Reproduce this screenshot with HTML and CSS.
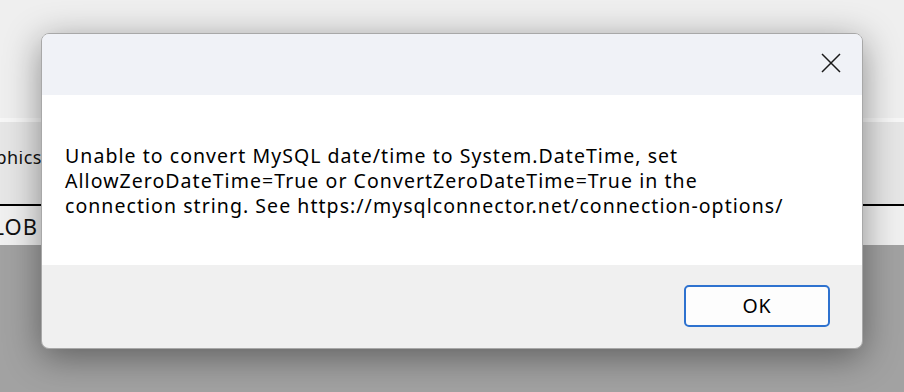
FILE: index.html
```html
<!DOCTYPE html>
<html>
<head>
<meta charset="utf-8">
<link rel="stylesheet" href="styles.css">
</head>
<body>
<div class="app">
  <div class="toolbar"></div>
  <div class="sep"></div>
  <div class="panel">
    <div class="cell"><span class="lbl">Graphics</span></div>
  </div>
  <div class="rule"></div>
  <div class="row">
    <div class="cell"><span class="lbl big">BLOB</span></div>
  </div>
  <div class="dark"></div>
</div>
<div class="dialog">
  <div class="titlebar">
    <button class="close" aria-label="Close">
      <svg width="20" height="20" viewBox="0 0 20 20"><path d="M1 1 L19 19 M19 1 L1 19" stroke="#1a1a1a" stroke-width="1.5" fill="none"/></svg>
    </button>
  </div>
  <div class="content">
    <p class="msg">Unable to convert MySQL date/time to System.DateTime, set<br>AllowZeroDateTime=True or ConvertZeroDateTime=True in the<br>connection string. See https://mysqlconnector.net/connection-options/</p>
  </div>
  <div class="footer">
    <button class="ok">OK</button>
  </div>
</div>
</body>
</html>
```
FILE: styles.css
```css
html, body {
  margin: 0;
  padding: 0;
  width: 904px;
  height: 392px;
  overflow: hidden;
  font-family: "Noto Sans", "Open Sans", sans-serif;
}
.app {
  display: flex;
  flex-direction: column;
  height: 392px;
}
.toolbar {
  height: 118px;
  background: #efefef;
}
.sep {
  height: 4px;
  background: #f7f7f7;
}
.panel {
  height: 82px;
  background: #e6e6e6;
  display: flex;
  align-items: center;
}
.cell {
  width: 42px;
  overflow: hidden;
  display: flex;
  justify-content: flex-end;
  white-space: nowrap;
}
.lbl {
  font-size: 18px;
  letter-spacing: 0.5px;
  color: #111;
}
.panel .lbl {
  margin-right: 0;
  position: relative;
  top: -6px;
}
.rule {
  height: 2px;
  background: #000;
}
.row {
  height: 39px;
  background: #f0f0f0;
  display: flex;
  align-items: center;
}
.row .lbl {
  margin-right: 4px;
}
.big {
  font-size: 22px;
  letter-spacing: 1px;
}
.dark {
  flex: 1;
  background: #a2a2a2;
}
.dialog {
  position: absolute;
  left: 41px;
  top: 33px;
  width: 820px;
  height: 314px;
  border: 1px solid #a8a8a8;
  border-radius: 8px;
  overflow: hidden;
  display: flex;
  flex-direction: column;
  box-shadow: 0 8px 36px rgba(0, 0, 0, 0.42);
}
.titlebar {
  height: 61px;
  background: #f0f2f7;
  display: flex;
  justify-content: flex-end;
  align-items: flex-start;
}
.close {
  border: 0;
  background: transparent;
  padding: 0;
  margin: 19px 21px 0 0;
  width: 20px;
  height: 20px;
  display: block;
}
.close svg {
  display: block;
}
.content {
  height: 170px;
  background: #ffffff;
  display: flex;
  align-items: center;
}
.msg {
  margin: 0 0 0 23px;
  font-size: 19.5px;
  letter-spacing: 1.05px;
  line-height: 25px;
  color: #000;
}
.footer {
  flex: 1;
  background: #f0f0f0;
  display: flex;
  justify-content: flex-end;
  align-items: center;
  padding-right: 32px;
}
.ok {
  width: 146px;
  height: 42px;
  border: 2px solid #2e72cf;
  border-radius: 5px;
  background: #fdfdfd;
  font-family: "Noto Sans", "Open Sans", sans-serif;
  font-size: 19.5px;
  letter-spacing: 0.8px;
  color: #000;
  padding: 0;
  margin-top: -2px;
}
```
